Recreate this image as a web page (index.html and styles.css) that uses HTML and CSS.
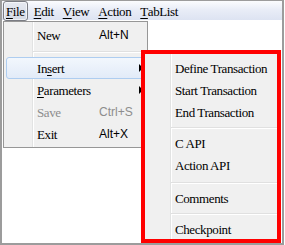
FILE: index.html
```html
<!DOCTYPE html>
<html>
<head>
<meta charset="utf-8">
<link rel="stylesheet" href="styles.css">
</head>
<body>
<div class="window">
  <div class="menubar">
    <span class="mi active"><u>F</u>ile</span>
    <span class="mi"><u>E</u>dit</span>
    <span class="mi"><u>V</u>iew</span>
    <span class="mi"><u>A</u>ction</span>
    <span class="mi"><u>T</u>abList</span>
  </div>
  <div class="content"></div>
  <div class="dropdown">
    <div class="row"><span class="lbl">New</span><span class="key">Alt+N</span></div>
    <div class="sep"></div>
    <div class="row hl"><span class="lbl">In<u>s</u>ert</span><span class="arrow"></span></div>
    <div class="row"><span class="lbl"><u>P</u>arameters</span><span class="arrow"></span></div>
    <div class="row dis"><span class="lbl">Save</span><span class="key">Ctrl+S</span></div>
    <div class="row"><span class="lbl">Exit</span><span class="key">Alt+X</span></div>
  </div>
  <div class="submenu">
    <div class="row">Define Transaction</div>
    <div class="row">Start Transaction</div>
    <div class="row">End Transaction</div>
    <div class="sep"></div>
    <div class="row">C API</div>
    <div class="row">Action API</div>
    <div class="sep wide"></div>
    <div class="row">Comments</div>
    <div class="sep"></div>
    <div class="row">Checkpoint</div>
  </div>
</div>
</body>
</html>
```
FILE: styles.css
```css
* { box-sizing: border-box; }
html, body { margin: 0; padding: 0; background: #fff; }
body {
  font-family: "Liberation Serif", "Times New Roman", serif;
  font-size: 13px;
  letter-spacing: -0.4px;
  color: #000;
}
u { text-decoration: underline; text-underline-offset: 2px; }
.window {
  position: relative;
  width: 284px;
  height: 245px;
  border: 2px solid #9c9c9c;
  border-top-width: 1px;
  background: #fff;
}
.menubar {
  height: 19px;
  display: flex;
  align-items: flex-start;
  gap: 3px;
  padding-left: 1px;
  background: linear-gradient(#fbfcfe 0%, #e9edf7 45%, #dde3f2 100%);
}
.mi {
  height: 20px;
  padding: 0 2px;
  border: 1px solid transparent;
  display: flex;
  align-items: center;
  line-height: 1;
}
.mi.active {
  border-color: #7b7d84;
  border-radius: 3px;
  background: linear-gradient(#e6e9f0, #d5dae5);
  box-shadow: inset 0 0 0 1px rgba(255,255,255,0.6);
}
.content { flex: 1; }
.dropdown {
  position: absolute;
  left: 1px;
  top: 20px;
  width: 145px;
  height: 127px;
  border: 1px solid #979797;
  padding: 2px 0 1px;
  background:
    linear-gradient(to right, transparent 28px, #e2e3e3 28px, #e2e3e3 29px, #fff 29px, #fff 30px, transparent 30px),
    #f0f0f0;
}
.row {
  height: 22px;
  margin: 0 2px;
  border: 1px solid transparent;
  border-radius: 3px;
  padding-left: 30px;
  display: flex;
  align-items: center;
  line-height: 1;
  white-space: nowrap;
}
.dropdown .lbl { width: 62px; }
.key {
  font-family: "Liberation Sans", Arial, sans-serif;
  font-size: 12px;
  letter-spacing: 0;
}
.row.dis { color: #8d8d8d; }
.row.hl {
  border-color: #aecdf0;
  background: linear-gradient(#f2f7fd, #e2ebf8);
}
.arrow {
  margin-left: auto;
  margin-right: 1px;
  width: 0;
  height: 0;
  border-left: 4px solid #000;
  border-top: 4px solid transparent;
  border-bottom: 4px solid transparent;
}
.sep {
  height: 11px;
  margin-left: 29px;
  margin-right: 2px;
  background: linear-gradient(transparent 5px, #e0e0e0 5px, #e0e0e0 6px, #fff 6px, #fff 7px, transparent 7px);
}
.submenu {
  position: absolute;
  left: 139px;
  top: 49px;
  width: 140px;
  height: 193px;
  border: 4px solid #ff0000;
  padding-top: 3px;
  overflow: hidden;
  background:
    linear-gradient(to right, transparent 25px, #e2e3e3 25px, #e2e3e3 26px, #fff 26px, #fff 27px, transparent 27px),
    #f0f0f0;
}
.submenu .row { padding-left: 27px; }
.submenu .sep {
  height: 9px;
  margin-left: 26px;
  margin-right: 0;
  background: linear-gradient(transparent 4px, #e0e0e0 4px, #e0e0e0 5px, #fff 5px, #fff 6px, transparent 6px);
}
.submenu .sep.wide {
  height: 11px;
  background: linear-gradient(transparent 6px, #e0e0e0 6px, #e0e0e0 7px, #fff 7px, #fff 8px, transparent 8px);
}
```
